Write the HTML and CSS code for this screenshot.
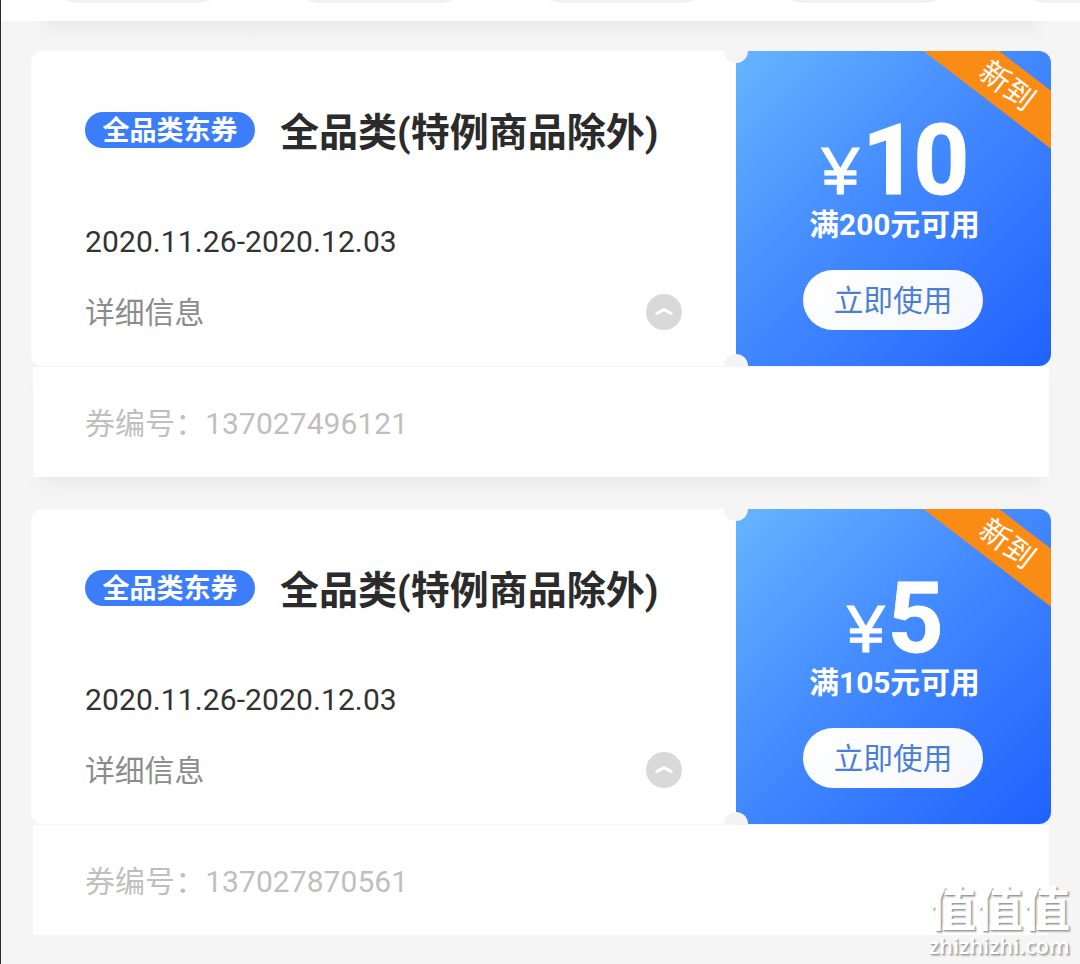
FILE: index.html
```html
<!DOCTYPE html>
<html lang="zh-CN">
<head>
<meta charset="utf-8">
<title>优惠券</title>
<link rel="stylesheet" href="styles.css">
</head>
<body>
<main class="screen">
  <nav class="filters"><i class="filter"></i><i class="filter"></i><i class="filter"></i><i class="filter"></i><i class="filter"></i></nav>
  <div class="list">
    <section class="coupon">
      <div class="ticket">
        <div class="info">
          <div class="heading"><span class="tag">全品类东券</span><h2 class="title">全品类(特例商品除外)</h2></div>
          <div class="date">2020.11.26-2020.12.03</div>
          <div class="more"><span>详细信息</span>
            <svg class="toggle" viewBox="0 0 36 36"><circle cx="18" cy="18" r="18" fill="#d9d9d9"/><path d="M9.5 18.4 18 14 26.5 18.4V21.4L18 17.6 9.5 21.4Z" fill="#fff"/></svg>
          </div>
        </div>
        <div class="value">
          <div class="ribbon">新到</div>
          <div class="amount"><span class="yen">¥</span><b class="number">10</b></div>
          <div class="limit">满200元可用</div>
          <button class="use">立即使用</button>
        </div>
        <i class="notch notch-top"></i><i class="notch notch-bottom"></i>
      </div>
      <div class="serial">券编号：137027496121</div>
    </section>
    <section class="coupon">
      <div class="ticket">
        <div class="info">
          <div class="heading"><span class="tag">全品类东券</span><h2 class="title">全品类(特例商品除外)</h2></div>
          <div class="date">2020.11.26-2020.12.03</div>
          <div class="more"><span>详细信息</span>
            <svg class="toggle" viewBox="0 0 36 36"><circle cx="18" cy="18" r="18" fill="#d9d9d9"/><path d="M9.5 18.4 18 14 26.5 18.4V21.4L18 17.6 9.5 21.4Z" fill="#fff"/></svg>
          </div>
        </div>
        <div class="value">
          <div class="ribbon">新到</div>
          <div class="amount"><span class="yen">¥</span><b class="number">5</b></div>
          <div class="limit">满105元可用</div>
          <button class="use">立即使用</button>
        </div>
        <i class="notch notch-top"></i><i class="notch notch-bottom"></i>
      </div>
      <div class="serial serial-last">券编号：137027870561</div>
    </section>
  </div>
  <div class="watermark"><div class="mark-name">值值值</div><div class="mark-site">zhizhizhi.com</div></div>
</main>
</body>
</html>
```
FILE: styles.css
```css
* { box-sizing: border-box; }
body { margin: 0; font-family: Roboto, "Noto Sans CJK SC", sans-serif; }
.screen {
  position: relative;
  width: 1080px;
  height: 964px;
  overflow: hidden;
  background: #f5f5f5;
  border-left: 1px solid #2b2b2b;
}
.filters {
  height: 21px;
  display: flex;
  gap: 62px;
  padding-left: 47px;
  background: #fff;
  overflow: hidden;
}
.filter {
  flex: none;
  width: 180px;
  height: 60px;
  margin-top: -57px;
  border-radius: 30px;
  background: #f2f2f2;
}
.list {
  padding: 0 29px 0 30px;
}
.list::before {
  content: "";
  display: block;
  height: 20px;
  margin: 0 4px 10px;
  background:
    linear-gradient(90deg, #f5f5f5, transparent 16px, transparent calc(100% - 16px), #f5f5f5),
    linear-gradient(#ececec, #f5f5f5);
}
.coupon { height: 458px; }
.ticket {
  position: relative;
  display: flex;
  height: 315px;
  border-radius: 12px;
  background: #fff;
  box-shadow: 0 1px 1px #f4f4f4;
}
.info { width: 705px; padding: 57px 54px 0; }
.heading { display: flex; align-items: center; gap: 25px; height: 50px; }
.tag {
  flex: none;
  width: 170px;
  height: 36px;
  margin-top: -6px;
  border-radius: 18px;
  background: #3b7dfa;
  color: #fff;
  font-size: 27px;
  font-weight: 700;
  line-height: 38px;
  text-align: center;
}
.title { margin: 0; font-size: 39px; line-height: 50px; color: #2b2b2b; white-space: nowrap; }
.date { margin-top: 64px; font-size: 30px; letter-spacing: 0.1px; line-height: 40px; color: #333; }
.more {
  display: flex;
  justify-content: space-between;
  align-items: center;
  height: 40px;
  margin-top: 30px;
  font-size: 29.8px;
  line-height: 39px;
  color: #8c8c8c;
}
.toggle { width: 36px; height: 36px; }
.value {
  position: relative;
  display: flex;
  flex-direction: column;
  align-items: center;
  width: 315px;
  padding-right: 1px;
  overflow: hidden;
  border-radius: 0 12px 12px 0;
  background: linear-gradient(135deg, #66b5ff 0%, #468dff 42%, #1f61ff 100%);
  color: #fff;
}
.amount { display: flex; align-items: baseline; height: 86px; margin-top: 67px; gap: 3px; }
.yen { font: 400 67px/80px "Liberation Sans", sans-serif; -webkit-text-stroke: 1.2px #fff; }
.number { font-size: 98px; line-height: 86px; letter-spacing: -5px; -webkit-text-stroke: 0.8px #fff; }
.limit { font-size: 29.8px; font-weight: 700; line-height: 36px; margin: 3px 0 0 3px; }
.use {
  width: 180px;
  height: 60px;
  margin-top: 27px;
  padding: 0;
  border: 0;
  border-radius: 30px;
  background: linear-gradient(135deg, #fff, #f6f8ff);
  color: #4b7fd6;
  font: 29.7px/62px Roboto, "Noto Sans CJK SC", sans-serif;
}
.ribbon {
  position: absolute;
  left: 171px;
  top: 12px;
  width: 200px;
  height: 46px;
  transform: rotate(37.5deg);
  background: #fa8c16;
  font-size: 30px;
  line-height: 45px;
  text-align: center;
}
.notch {
  position: absolute;
  left: 693px;
  width: 24px;
  height: 12px;
  background: #f4f4f4;
}
.notch-top { top: 0; border-radius: 0 0 12px 12px; }
.notch-bottom { bottom: 0; border-radius: 12px 12px 0 0; }
.serial {
  height: 110px;
  margin: 1px 2px 0;
  padding-left: 52px;
  background: #fff;
  box-shadow: 0 14px 16px -8px #e8e8e8;
  font-size: 30px;
  letter-spacing: 0.05px;
  line-height: 114px;
  color: #bfbfbf;
}
.serial-last { box-shadow: none; }
.watermark {
  position: absolute;
  left: 928px;
  top: 880px;
  width: 146px;
  color: #fff;
  text-shadow: 1px 1px 1px #999, 2px 2px 2px #bbb;
}
.mark-name { font: 700 47px/52px "Noto Sans CJK SC", sans-serif; white-space: nowrap; }
.mark-site { font: 600 21.6px/28px "Open Sans", sans-serif; }
```
